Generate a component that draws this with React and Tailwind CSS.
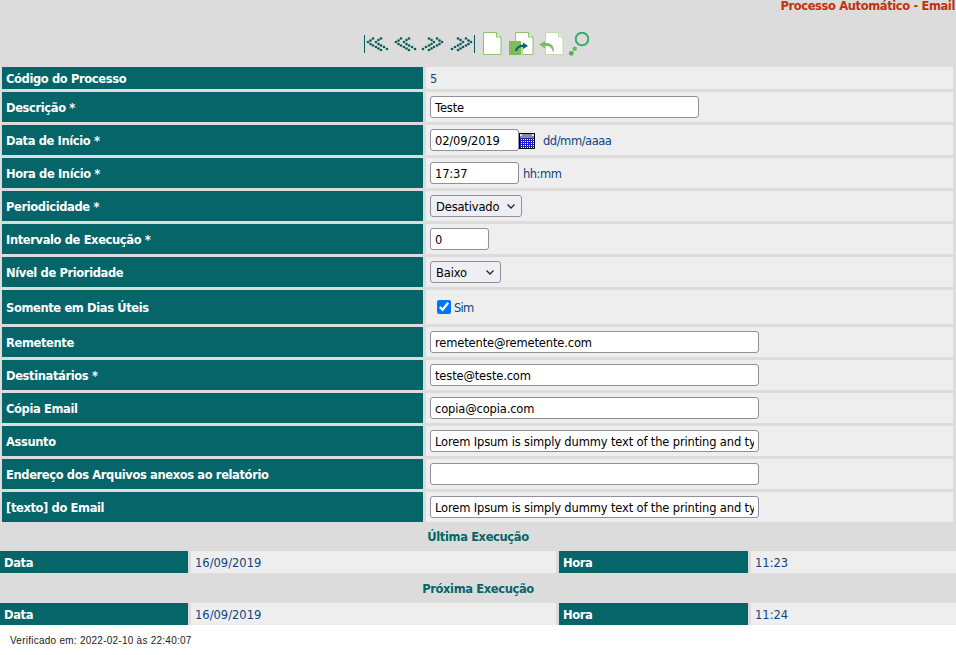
const boldText = "font-bold text-[11.5px] tracking-[-0.38px]";
const tealLabel = `bg-[#056568] text-white flex items-center px-1 pt-[4px] ${boldText}`;
const valueCell = "bg-[#eeeeee] flex items-center px-1 text-[#0a4587]";
const valueText = "text-[11.5px] pt-[4px]";
const inputCls = "bg-white text-black border border-[#8f8f9d] rounded-[3px] px-[4px] pt-[2px] h-[22px] text-[11.5px] tracking-[-0.15px] outline-none";

const lorem = "Lorem Ipsum is simply dummy text of the printing and typesetting industry.";

const chevronDots = [
  [3, 7], [5.5, 5.5], [8, 3.5], [5.5, 9], [8, 10.5], [11, 12], [13.5, 13.5], [16, 15],
  [11, 7], [13.5, 5], [16, 3.5], [13.5, 9], [16, 10.5], [19, 12], [22, 14],
];

function NavIcon({ flip, bar }) {
  return (
    <svg width="26" height="24" viewBox="0 0 26 24" className={flip ? "-scale-x-100" : ""}>
      {bar && <rect x="0" y="3" width="1" height="18" fill="#05585c" />}
      <g transform="translate(1 3)">
        {chevronDots.map(([x, y]) => (
          <circle key={`${x}-${y}`} cx={x} cy={y} r="1.35" fill="#0b5e58" />
        ))}
      </g>
    </svg>
  );
}

function DocIcon({ x = 0, stroke = "#8cc36b" }) {
  return (
    <path
      transform={`translate(${x} 0)`}
      d="M0.5 0.5 H13.5 L18 5 V22.5 H0.5 Z"
      fill="white"
      stroke={stroke}
      strokeWidth="1"
    />
  );
}

function Toolbar() {
  return (
    <div className="h-[36px] flex items-start justify-center pr-[2px] pt-[1px]">
      <div className="flex items-start">
        <NavIcon bar />
        <div className="w-[2px]" />
        <NavIcon />
        <div className="w-[2px]" />
        <NavIcon flip />
        <div className="w-[3px]" />
        <NavIcon flip bar />
        <div className="w-[8px]" />
        <svg width="19" height="24" viewBox="0 0 19 24">
          <DocIcon />
          <path d="M13.5 0.5 V5 H18" fill="#dfeed4" stroke="#8cc36b" />
        </svg>
        <div className="w-[7px]" />
        <svg width="25" height="24" viewBox="0 0 25 24">
          <DocIcon x={6} />
          <path d="M19.5 0.5 V5 H24" fill="#dfeed4" stroke="#8cc36b" />
          <rect x="0" y="9" width="12" height="14" fill="#80bb5a" />
          <rect x="12" y="12" width="2" height="11" fill="#b9dca2" />
          <path d="M6 19 C7 14 11 12.5 14 13 V10.5 L19 14 L14 17 V15 C11 14.5 9 16 8 19 Z" fill="#056568" />
        </svg>
        <div className="w-[4px]" />
        <svg width="26" height="24" viewBox="0 0 26 24">
          <DocIcon x={7} stroke="#bcdcaa" />
          <path d="M20.5 0.5 V5 H25" fill="#e8f3e0" stroke="#bcdcaa" />
          <path d="M15 20 C14 15 11 13.5 7 14 V16.5 L1 12.5 L7 9 V11 C12 10.5 16 13 16 19 Z" fill="#7fbb68" />
        </svg>
        <div className="w-[4px]" />
        <svg width="22" height="24" viewBox="0 0 22 24">
          <circle cx="14" cy="7" r="6.3" fill="none" stroke="#3ea96c" strokeWidth="2" />
          <circle cx="6.7" cy="16.7" r="2.2" fill="#6bb85c" />
          <circle cx="3.3" cy="21.3" r="2.4" fill="#4fae64" />
        </svg>
      </div>
    </div>
  );
}

function CalendarIcon() {
  return (
    <svg width="16" height="16" viewBox="0 0 16 16" className="mt-[2px]">
      <rect x="0" y="0" width="16" height="16" fill="#000" />
      <rect x="1" y="1" width="14" height="4" fill="#8d8d8d" />
      <rect x="1" y="1" width="2" height="2" fill="#e8e8e8" />
      <rect x="13" y="1" width="2" height="2" fill="#e8e8e8" />
      <rect x="1" y="5" width="14" height="10" fill="#1c1cc8" />
      {[6, 8, 10, 12, 14].map((y) =>
        [2, 4, 6, 8, 10, 12, 14].map((x) => (
          <rect key={`${x}-${y}`} x={x} y={y} width="1" height="1" fill={x === 10 && y === 10 ? "#f01010" : "#ffffff"} />
        ))
      )}
    </svg>
  );
}

function SelectBox({ value, width }) {
  return (
    <div className={`relative h-[22px] ${width}`}>
      <select
        defaultValue={value}
        className="appearance-none w-full h-full bg-[#efeff3] text-black border border-[#8f8f9d] rounded-[3px] pl-[5px] pt-[3px] text-[11.5px] tracking-[-0.15px] outline-none"
      >
        <option>{value}</option>
      </select>
      <svg width="8" height="5" viewBox="0 0 8 5" className="absolute right-[7px] top-[9px] pointer-events-none">
        <path d="M0.5 0.5 L4 4 L7.5 0.5" fill="none" stroke="#222" strokeWidth="1.3" />
      </svg>
    </div>
  );
}

function Row({ label, h = "h-[30px]", children }) {
  return (
    <>
      <div className={`${tealLabel} ${h}`}>{label}</div>
      <div className={`${valueCell} ${h}`}>{children}</div>
    </>
  );
}

function ExecRow({ date, time }) {
  return (
    <div className="grid grid-cols-[188px_365px_189px_1fr] gap-x-[3px] h-[22px]">
      <div className={tealLabel}>Data</div>
      <div className={valueCell}><span className={valueText}>{date}</span></div>
      <div className={tealLabel}>Hora</div>
      <div className={valueCell}><span className={valueText}>{time}</span></div>
    </div>
  );
}

export default function App() {
  return (
    <div className="w-[956px] h-[655px] overflow-hidden bg-white text-[11px] font-['DejaVu_Sans',sans-serif]">
      <div className="bg-[#dcdcdc]">
        <div className="h-[31px]">
          <div className={`text-right text-[#c4300c] whitespace-nowrap pr-[1px] leading-[13px] ${boldText}`}>
            Processo Automático - Email
          </div>
        </div>
        <Toolbar />

        <div className="grid grid-cols-[421px_527px] gap-[3px] pl-[2px]">
          <Row label="Código do Processo" h="h-[22px]">
            <span className={valueText}>5</span>
          </Row>
          <Row label="Descrição *">
            <input readOnly value="Teste" className={`${inputCls} w-[269px]`} />
          </Row>
          <Row label="Data de Início *">
            <input readOnly value="02/09/2019" className={`${inputCls} w-[89px]`} />
            <CalendarIcon />
            <span className={`${valueText} ml-[8px] tracking-[-0.45px]`}>dd/mm/aaaa</span>
          </Row>
          <Row label="Hora de Início *">
            <input readOnly value="17:37" className={`${inputCls} w-[89px]`} />
            <span className={`${valueText} ml-[4px] tracking-[-0.5px]`}>hh:mm</span>
          </Row>
          <Row label="Periodicidade *">
            <SelectBox value="Desativado" width="w-[92px]" />
          </Row>
          <Row label="Intervalo de Execução *">
            <input readOnly value="0" className={`${inputCls} w-[59px]`} />
          </Row>
          <Row label="Nível de Prioridade">
            <SelectBox value="Baixo" width="w-[71px]" />
          </Row>
          <Row label="Somente em Dias Úteis" h="h-[34px]">
            <label className="flex items-center ml-[7px]">
              <input type="checkbox" readOnly checked className="w-[14px] h-[14px] m-0" />
              <span className={`${valueText} ml-[3px] tracking-[-0.7px]`}>Sim</span>
            </label>
          </Row>
          <Row label="Remetente">
            <input readOnly value="remetente@remetente.com" className={`${inputCls} w-[329px]`} />
          </Row>
          <Row label="Destinatários *">
            <input readOnly value="teste@teste.com" className={`${inputCls} w-[329px]`} />
          </Row>
          <Row label="Cópia Email">
            <input readOnly value="copia@copia.com" className={`${inputCls} w-[329px]`} />
          </Row>
          <Row label="Assunto">
            <input readOnly value={lorem} className={`${inputCls} w-[329px]`} />
          </Row>
          <Row label="Endereço dos Arquivos anexos ao relatório">
            <input readOnly value="" className={`${inputCls} w-[329px]`} />
          </Row>
          <Row label="[texto] do Email">
            <input readOnly value={lorem} className={`${inputCls} w-[329px]`} />
          </Row>
        </div>

        <div className={`h-[29px] flex items-center justify-center pt-[2px] text-[#056568] ${boldText}`}>Última Execução</div>
        <ExecRow date="16/09/2019" time="11:23" />
        <div className={`h-[30px] flex items-center justify-center pt-[3px] text-[#056568] ${boldText}`}>Próxima Execução</div>
        <ExecRow date="16/09/2019" time="11:24" />
      </div>
      <div className="pl-[10px] pt-[10px] text-[10px] tracking-[0.25px] leading-[12px] text-[#222] font-['Liberation_Sans',sans-serif]">
        Verificado em: 2022-02-10 às 22:40:07
      </div>
    </div>
  );
}
